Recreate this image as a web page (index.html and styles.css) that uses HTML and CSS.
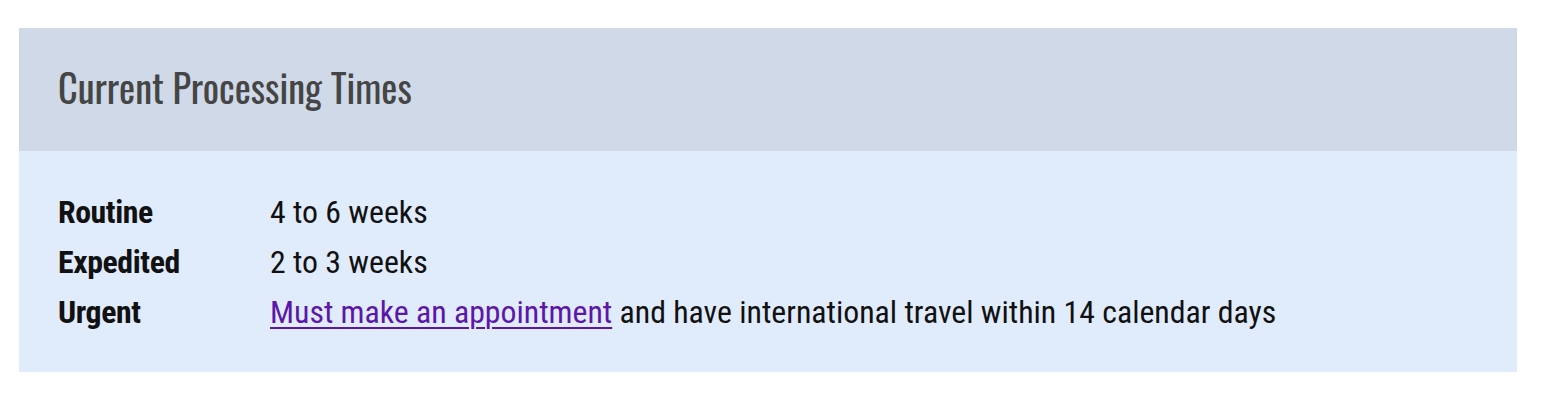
FILE: index.html
```html
<!DOCTYPE html>
<html lang="en">
<head>
<meta charset="utf-8">
<title>Current Processing Times</title>
<link rel="stylesheet" href="styles.css">
</head>
<body>
<section class="card">
  <header class="card-header">
    <h2 class="card-title">Current Processing Times</h2>
  </header>
  <div class="card-body">
    <dl class="times">
      <div class="row"><dt>Routine</dt><dd>4 to 6 weeks</dd></div>
      <div class="row"><dt>Expedited</dt><dd>2 to 3 weeks</dd></div>
      <div class="row"><dt>Urgent</dt><dd><a class="link" href="#">Must make an appointment</a> and have international travel within 14 calendar days</dd></div>
    </dl>
  </div>
</section>
</body>
</html>
```
FILE: styles.css
```css
html, body {
  margin: 0;
  padding: 0;
  background: #ffffff;
}

body {
  padding: 28px 0 0 19px;
}

.card {
  width: 1498px;
}

.card-header {
  background: #cfd9e8;
  height: 123px;
  display: flex;
  align-items: center;
  padding: 0 39px;
  box-sizing: border-box;
}

.card-title {
  margin: 0;
  font-family: "Oswald", "Roboto Condensed", sans-serif;
  font-weight: 400;
  font-size: 38.3px;
  line-height: 1;
  color: #454545;
  position: relative;
  top: -2px;
}

.card-body {
  background: #e0ebfc;
  padding: 36px 39px 35px;
}

.times {
  margin: 0;
  display: flex;
  flex-direction: column;
  font-family: "Roboto Condensed", "Roboto", sans-serif;
  font-size: 31.8px;
  line-height: 50px;
  color: #111111;
}

.row {
  display: grid;
  grid-template-columns: 212px 1fr;
}

.row dt {
  font-weight: 700;
  letter-spacing: -0.4px;
}

.row dd {
  margin: 0;
}

.link {
  color: #5c17a8;
  text-decoration: underline;
  text-decoration-thickness: 2px;
  text-underline-offset: 4px;
}
```
